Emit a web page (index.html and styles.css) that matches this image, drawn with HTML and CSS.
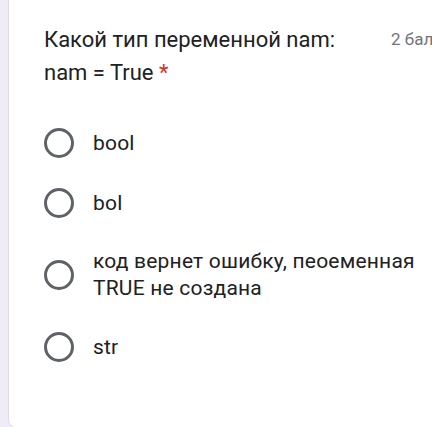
FILE: index.html
```html
<!DOCTYPE html>
<html>
<head>
    <title>Вопрос</title>
    <link rel="stylesheet" href="styles.css">
</head>
<body>
    <div class="card">
        <div class="q-head">
            <div class="q-title">Какой тип переменной nam:<br>nam = True <span class="req">*</span></div>
            <div class="q-points">2 балла</div>
        </div>

        <div class="options">
            <label class="option">
                <span class="radio"></span>
                <span class="opt-text">bool</span>
            </label>
            <label class="option">
                <span class="radio"></span>
                <span class="opt-text">bol</span>
            </label>
            <label class="option">
                <span class="radio"></span>
                <span class="opt-text">код вернет ошибку, пеоеменная TRUE не создана</span>
            </label>
            <label class="option">
                <span class="radio"></span>
                <span class="opt-text">str</span>
            </label>
        </div>
    </div>
</body>
</html>
```

FILE: styles.css
```css
body {
    font-family: Roboto, Arial, sans-serif;
    background-color: #efebf7;
    margin: 0;
    overflow: hidden;
}
.card {
    background: white;
    margin: -10px 0 0 8px;
    width: 480px;
    padding: 32px 0 51px 35px;
    border: 1px solid #dfdce6;
    border-radius: 0 0 10px 10px;
    box-sizing: border-box;
}
.q-head {
    display: flex;
    align-items: flex-start;
}
.q-title {
    font-size: 22px;
    line-height: 33px;
    color: #202124;
    width: 347px;
}
.req {
    color: #d93025;
}
.q-points {
    font-size: 17px;
    color: #70757a;
    margin-top: 6px;
}
.options {
    margin-top: 24px;
    width: 390px;
}
.option {
    display: flex;
    align-items: center;
    padding: 15px 0;
}
.radio {
    flex: none;
    width: 24px;
    height: 24px;
    border: 3px solid #5f6368;
    border-radius: 50%;
    margin-right: 19px;
}
.opt-text {
    font-size: 21px;
    line-height: 27px;
    letter-spacing: 0.2px;
    color: #202124;
}
```
